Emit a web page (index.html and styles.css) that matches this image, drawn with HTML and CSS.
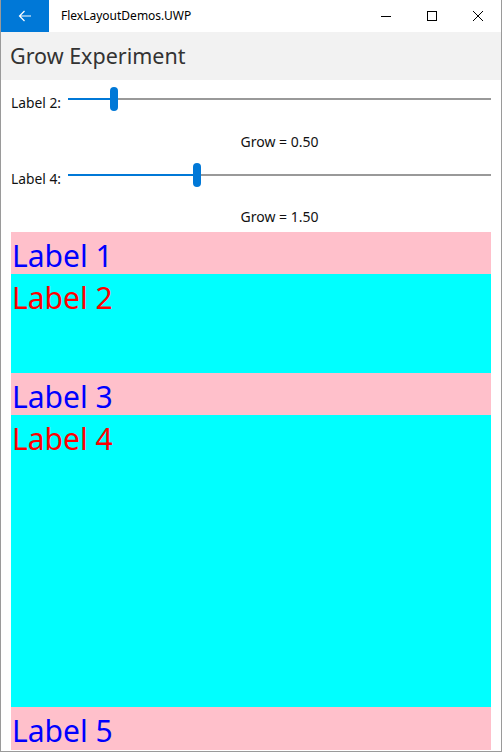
FILE: index.html
```html
<!DOCTYPE html>
<html>
<head>
<meta charset="utf-8">
<link rel="stylesheet" href="styles.css">
</head>
<body>
<div class="window">
  <div class="titlebar">
    <div class="back">
      <svg width="48" height="32" viewBox="0 0 48 32"><path d="M18.5 16 H30 M23.5 11 L18.5 16 L23.5 21" fill="none" stroke="#fff" stroke-width="1.2"/></svg>
    </div>
    <div class="apptitle">FlexLayoutDemos.UWP</div>
    <div class="controls">
      <div class="ctl"><svg width="46" height="32" viewBox="0 0 46 32"><path d="M18 16.5 H28" stroke="#000" stroke-width="1"/></svg></div>
      <div class="ctl"><svg width="46" height="32" viewBox="0 0 46 32"><rect x="18.5" y="11.5" width="9" height="9" fill="none" stroke="#000" stroke-width="1"/></svg></div>
      <div class="ctl"><svg width="46" height="32" viewBox="0 0 46 32"><path d="M18 11 L28 21 M28 11 L18 21" stroke="#000" stroke-width="1"/></svg></div>
    </div>
  </div>
  <div class="header">Grow Experiment</div>
  <div class="content">
    <div class="slider-row first">
      <span class="slabel">Label 2:</span>
      <div class="slider">
        <div class="fill" style="width: 10%"></div>
        <div class="thumb" style="left: calc((100% - 8px) * 0.1)"></div>
      </div>
    </div>
    <div class="grow-text g1">Grow = 0.50</div>
    <div class="slider-row second">
      <span class="slabel">Label 4:</span>
      <div class="slider">
        <div class="fill" style="width: 30%"></div>
        <div class="thumb" style="left: calc((100% - 8px) * 0.3)"></div>
      </div>
    </div>
    <div class="grow-text g2">Grow = 1.50</div>
    <div class="boxes">
      <div class="box pink l1">Label 1</div>
      <div class="box cyan l2">Label 2</div>
      <div class="box pink l3">Label 3</div>
      <div class="box cyan l4">Label 4</div>
      <div class="box pink l5">Label 5</div>
    </div>
  </div>
</div>
</body>
</html>
```

FILE: styles.css
```css
html, body {
  margin: 0;
  padding: 0;
  background: #fff;
}
body {
  font-family: "Noto Sans", "Open Sans", sans-serif;
}
.window {
  width: 502px;
  height: 752px;
  box-sizing: border-box;
  border: 1px solid #9a9a9a;
  border-top: none;
  display: flex;
  flex-direction: column;
  overflow: hidden;
}
.titlebar {
  height: 32px;
  display: flex;
  align-items: stretch;
  background: #fff;
  flex: none;
}
.back {
  width: 48px;
  background: #0078d7;
}
.back svg, .ctl svg {
  display: block;
}
.apptitle {
  flex: 1;
  font-size: 12px;
  line-height: 32px;
  padding-left: 12px;
  color: #000;
}
.controls {
  display: flex;
}
.ctl {
  width: 46px;
}
.header {
  height: 48px;
  background: #f2f2f2;
  font-size: 21.5px;
  line-height: 48px;
  padding-left: 9px;
  color: #333;
  flex: none;
}
.content {
  flex: 1;
  display: flex;
  flex-direction: column;
  padding: 0 10px;
  min-height: 0;
}
.slider-row {
  height: 38px;
  display: flex;
  align-items: center;
  flex: none;
}
.slider-row.second {
  margin-top: 4px;
}
.slabel {
  font-size: 13.8px;
  color: #111;
  margin-top: 7px;
  width: 57px;
  flex: none;
}
.slider {
  flex: 1;
  position: relative;
  height: 2px;
  background: #999;
}
.fill {
  height: 2px;
  background: #0078d7;
}
.thumb {
  position: absolute;
  top: -11px;
  width: 8px;
  height: 24px;
  border-radius: 4px;
  background: #0078d7;
}
.grow-text {
  font-size: 14px;
  line-height: 20px;
  text-align: center;
  color: #111;
  flex: none;
  margin-left: 57px;
}
.g1 { margin-top: 14px; }
.g2 { margin-top: 13px; }
.boxes {
  flex: 1;
  display: flex;
  flex-direction: column;
  margin-top: 5px;
}
.box {
  height: 42px;
  flex: none;
  font-size: 30px;
  line-height: 47px;
  padding-left: 1px;
  box-sizing: border-box;
}
.pink { background: #ffc0cb; color: #0000ff; }
.cyan { background: #00ffff; color: #ff0000; }
.l2 { height: 99px; }
.l4 { height: 292px; }
.l5 { height: 43px; }
```
